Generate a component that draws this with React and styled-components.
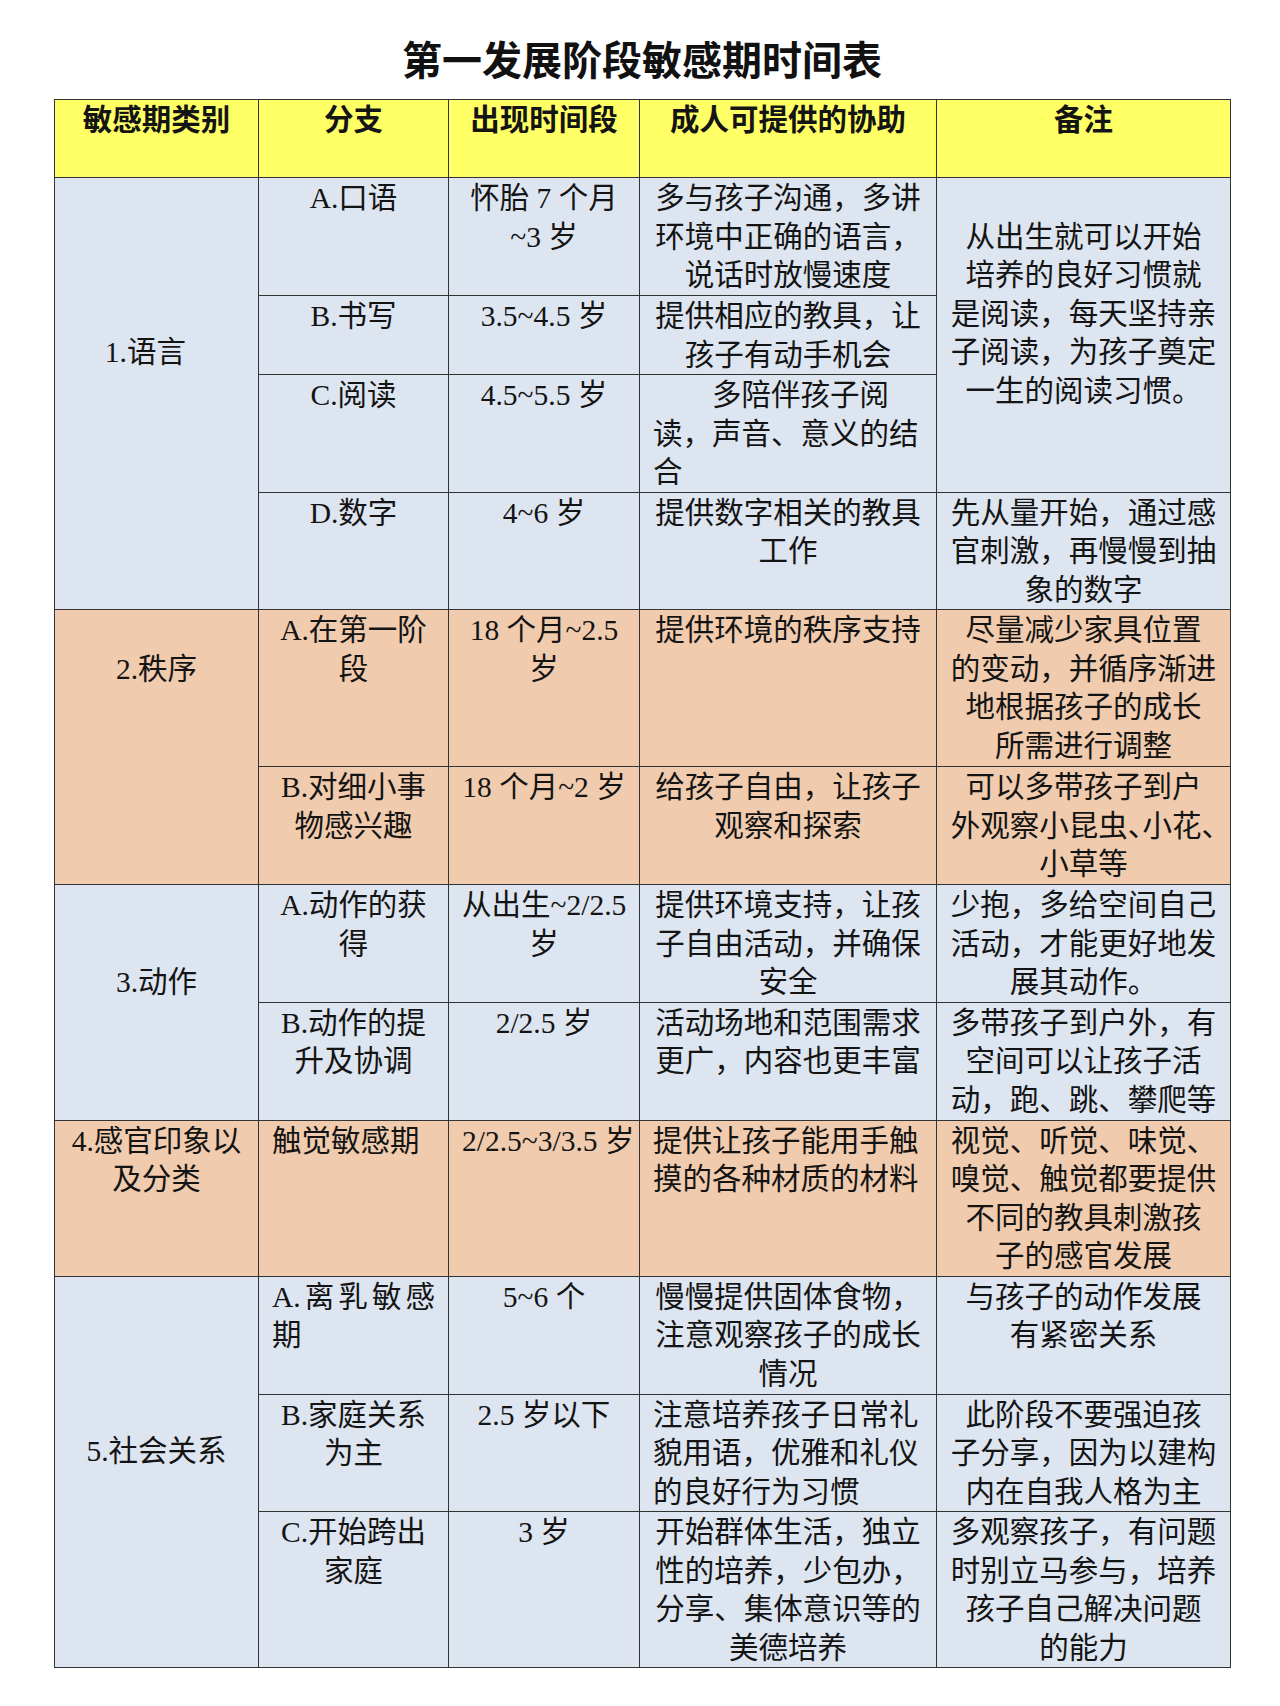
import React from 'react';
import styled, { createGlobalStyle } from 'styled-components';

// Palette and metrics

const YELLOW = '#ffff66';
const BLUE = '#dde5f0';
const PEACH = '#f0cbad';
const LINE = 38.5;

const GlobalStyle = createGlobalStyle`
  html, body {
    margin: 0;
    padding: 0;
    background: #ffffff;
  }
  body {
    font-family: "Liberation Serif", "Noto Sans CJK SC", serif;
    color: #141414;
  }
`;

const Page = styled.div`
  width: 1280px;
  min-height: 1706px;
  box-sizing: border-box;
  padding: 34px 50px 0 54px;
`;

const Title = styled.h1`
  width: 1176px;
  margin: 0 0 17px;
  text-align: center;
  font-family: "Noto Sans CJK SC", sans-serif;
  font-size: 40px;
  font-weight: 700;
  line-height: 48px;
  color: #111111;
`;

const Table = styled.table`
  width: 1176px;
  table-layout: fixed;
  border-collapse: collapse;
  border: 1.5px solid #2a2a2a;
`;

const Row = styled.tr`
  height: ${({ $h }) => $h}px;
`;

const Cell = styled.td`
  box-sizing: border-box;
  border: 1px solid #333333;
  border-top-color: ${({ $soft }) => ($soft ? '#9aa3ae' : '#333333')};
  background: ${({ $bg }) => $bg};
  vertical-align: top;
  padding: ${({ $lead }) => 1 + $lead * LINE}px 13px 0;
  text-align: ${({ $align }) => $align};
  font-size: 29.5px;
  line-height: ${LINE}px;
  font-weight: ${({ $head }) => ($head ? 700 : 400)};
`;

const Line = styled.span`
  display: block;
  white-space: ${({ $spread }) => ($spread ? 'normal' : 'nowrap')};
  text-indent: ${({ $indent }) => ($indent ? '2em' : '0')};
  text-align: ${({ $spread }) => ($spread ? 'justify' : 'inherit')};
  text-align-last: ${({ $spread }) => ($spread ? 'justify' : 'auto')};
`;

const Squeeze = styled.span`
  display: inline-block;
  width: 0.5em;
  overflow: visible;
`;

// Data

const c = (lines, opts = {}) => ({ lines, align: 'center', lead: 0, ...opts });

const headers = ['敏感期类别', '分支', '出现时间段', '成人可提供的协助', '备注'];

const sections = [
  {
    bg: BLUE,
    category: c(['1.语言\u00a0\u00a0\u00a0'], { lead: 4 }),
    rows: [
      {
        h: 118,
        branch: c(['A.口语']),
        time: c(['怀胎 7 个月', '~3 岁']),
        help: c(['多与孩子沟通，多讲', '环境中正确的语言，', '说话时放慢速度']),
        note: c(
          ['从出生就可以开始', '培养的良好习惯就', '是阅读，每天坚持亲', '子阅读，为孩子奠定', '一生的阅读习惯。'],
          { lead: 1, rowSpan: 3 }
        ),
      },
      {
        h: 79,
        branch: c(['B.书写']),
        time: c(['3.5~4.5 岁']),
        help: c(['提供相应的教具，让', '孩子有动手机会']),
      },
      {
        h: 117,
        branch: c(['C.阅读']),
        time: c(['4.5~5.5 岁']),
        help: c(['多陪伴孩子阅', '读，声音、意义的结', '合'], { align: 'left', indent: true }),
      },
      {
        h: 117,
        branch: c(['D.数字']),
        time: c(['4~6 岁']),
        help: c(['提供数字相关的教具', '工作']),
        note: c(['先从量开始，通过感', '官刺激，再慢慢到抽', '象的数字']),
      },
    ],
  },
  {
    bg: PEACH,
    category: c(['2.秩序'], { lead: 1 }),
    rows: [
      {
        h: 157,
        branch: c(['A.在第一阶', '段']),
        time: c(['18 个月~2.5', '岁']),
        help: c(['提供环境的秩序支持']),
        note: c(['尽量减少家具位置', '的变动，并循序渐进', '地根据孩子的成长', '所需进行调整']),
      },
      {
        h: 118,
        branch: c(['B.对细小事', '物感兴趣']),
        time: c(['18 个月~2 岁']),
        help: c(['给孩子自由，让孩子', '观察和探索']),
        note: c([
          '可以多带孩子到户',
          <>
            外观察小昆虫<Squeeze>、</Squeeze>小花<Squeeze>、</Squeeze>
          </>,
          '小草等',
        ]),
      },
    ],
  },
  {
    bg: BLUE,
    category: c(['3.动作'], { lead: 2 }),
    rows: [
      {
        h: 117,
        branch: c(['A.动作的获', '得']),
        time: c(['从出生~2/2.5', '岁']),
        help: c(['提供环境支持，让孩', '子自由活动，并确保', '安全']),
        note: c(['少抱，多给空间自己', '活动，才能更好地发', '展其动作。']),
      },
      {
        h: 118,
        branch: c(['B.动作的提', '升及协调']),
        time: c(['2/2.5 岁']),
        help: c(['活动场地和范围需求', '更广，内容也更丰富']),
        note: c(['多带孩子到户外，有', '空间可以让孩子活', '动，跑、跳、攀爬等']),
      },
    ],
  },
  {
    bg: PEACH,
    category: c(['4.感官印象以', '及分类']),
    rows: [
      {
        h: 155,
        branch: c(['触觉敏感期'], { align: 'left' }),
        time: c(['2/2.5~3/3.5 岁']),
        help: c(['提供让孩子能用手触', '摸的各种材质的材料'], { align: 'left' }),
        note: c(['视觉、听觉、味觉、', '嗅觉、触觉都要提供', '不同的教具刺激孩', '子的感官发展']),
      },
    ],
  },
  {
    bg: BLUE,
    category: c(['5.社会关系'], { lead: 4 }),
    rows: [
      {
        h: 118,
        branch: c(['A.离乳敏感', '期'], { align: 'left', spreadFirst: true }),
        time: c(['5~6 个']),
        help: c(['慢慢提供固体食物，', '注意观察孩子的成长', '情况']),
        note: c(['与孩子的动作发展', '有紧密关系']),
      },
      {
        h: 117,
        soft: true,
        branch: c(['B.家庭关系', '为主']),
        time: c(['2.5 岁以下']),
        help: c(['注意培养孩子日常礼', '貌用语，优雅和礼仪', '的良好行为习惯'], { align: 'left' }),
        note: c(['此阶段不要强迫孩', '子分享，因为以建构', '内在自我人格为主']),
      },
      {
        h: 156,
        branch: c(['C.开始跨出', '家庭']),
        time: c(['3 岁']),
        help: c(['开始群体生活，独立', '性的培养，少包办，', '分享、集体意识等的', '美德培养']),
        note: c(['多观察孩子，有问题', '时别立马参与，培养', '孩子自己解决问题', '的能力']),
      },
    ],
  },
];

// Cell renderer

const TableCell = ({ data, bg, soft, rowSpan }) => (
  <Cell
    rowSpan={rowSpan || data.rowSpan}
    $bg={bg}
    $soft={soft}
    $lead={data.lead}
    $align={data.align}
  >
    {data.lines.map((text, i) => (
      <Line
        key={i}
        $indent={data.indent && i === 0}
        $spread={data.spreadFirst && i === 0}
      >
        {text}
      </Line>
    ))}
  </Cell>
);

export default function App() {
  return (
    <>
      <GlobalStyle />
      <Page>
        <Title>第一发展阶段敏感期时间表</Title>
        <Table>
          <colgroup>
            <col style={{ width: 204 }} />
            <col style={{ width: 190 }} />
            <col style={{ width: 191 }} />
            <col style={{ width: 297 }} />
            <col style={{ width: 294 }} />
          </colgroup>
          <tbody>
            <Row $h={78}>
              {headers.map((h) => (
                <Cell key={h} $bg={YELLOW} $lead={0} $align="center" $head>
                  {h}
                </Cell>
              ))}
            </Row>
            {sections.map((s, si) =>
              s.rows.map((r, ri) => (
                <Row key={`${si}-${ri}`} $h={r.h}>
                  {ri === 0 && (
                    <TableCell data={s.category} bg={s.bg} rowSpan={s.rows.length} />
                  )}
                  <TableCell data={r.branch} bg={s.bg} soft={r.soft} />
                  <TableCell data={r.time} bg={s.bg} soft={r.soft} />
                  <TableCell data={r.help} bg={s.bg} soft={r.soft} />
                  {r.note && <TableCell data={r.note} bg={s.bg} soft={r.soft} />}
                </Row>
              ))
            )}
          </tbody>
        </Table>
      </Page>
    </>
  );
}
